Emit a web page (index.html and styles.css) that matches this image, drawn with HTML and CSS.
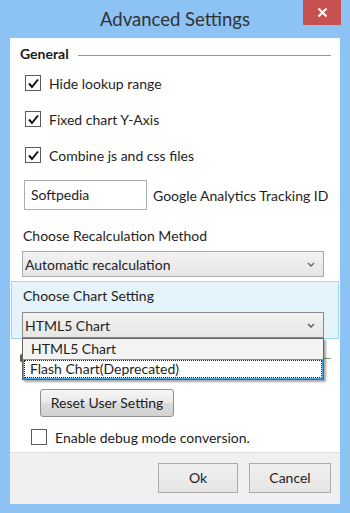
FILE: index.html
```html
<!DOCTYPE html>
<html>
<head>
<meta charset="utf-8">
<link rel="stylesheet" href="styles.css">
</head>
<body>
<div class="window">
  <div class="titlebar">
    <span></span>
    <div class="title">Advanced Settings</div>
    <div class="close">
      <svg width="11" height="11" viewBox="0 0 11 11"><path d="M1.5 1.5 L9.5 9.5 M9.5 1.5 L1.5 9.5" stroke="#fff" stroke-width="2.2" fill="none"/></svg>
    </div>
  </div>
  <div class="client">
    <div class="group-head"><span>General</span><div class="gline"></div></div>
    <div class="check-row first">
      <span class="cb"><svg width="13" height="13" viewBox="0 0 13 13"><path d="M2 6.5 L5 10 L11 2.5" stroke="#111" stroke-width="2" fill="none"/></svg></span>
      <span>Hide lookup range</span>
    </div>
    <div class="check-row">
      <span class="cb"><svg width="13" height="13" viewBox="0 0 13 13"><path d="M2 6.5 L5 10 L11 2.5" stroke="#111" stroke-width="2" fill="none"/></svg></span>
      <span>Fixed chart Y-Axis</span>
    </div>
    <div class="check-row">
      <span class="cb"><svg width="13" height="13" viewBox="0 0 13 13"><path d="M2 6.5 L5 10 L11 2.5" stroke="#111" stroke-width="2" fill="none"/></svg></span>
      <span>Combine js and css files</span>
    </div>
    <div class="text-row">
      <div class="textbox">Softpedia</div>
      <span>Google Analytics Tracking ID</span>
    </div>
    <div class="label recalc">Choose Recalculation Method</div>
    <div class="combo c1">
      <span>Automatic recalculation</span>
      <svg class="chev" width="8" height="5" viewBox="0 0 8 5"><path d="M1 1 L4 4 L7 1" stroke="#666" stroke-width="1.3" fill="none"/></svg>
    </div>
    <div class="panel">
      <div class="label">Choose Chart Setting</div>
      <div class="combo c2">
        <span>HTML5 Chart</span>
        <svg class="chev" width="8" height="5" viewBox="0 0 8 5"><path d="M1 1 L4 4 L7 1" stroke="#555" stroke-width="1.3" fill="none"/></svg>
        <div class="droplist">
          <div class="item">HTML5 Chart</div>
          <div class="item sel"><span class="dots">Flash Chart(Deprecated)</span></div>
        </div>
      </div>
    </div>
    <div class="group-head g2"><span class="gmark"></span><div class="gline"></div></div>
    <div class="hidden-row"></div>
    <div class="reset-btn">Reset User Setting</div>
    <div class="check-row debug">
      <span class="cb"></span>
      <span>Enable debug mode conversion.</span>
    </div>
    <div class="footer">
      <div class="btn ok">Ok</div>
      <div class="btn cancel">Cancel</div>
    </div>
  </div>
</div>
</body>
</html>
```
FILE: styles.css
```css
html, body {
  margin: 0;
  padding: 0;
}
body {
  width: 350px;
  height: 513px;
  background: #8cc2f4;
  font-family: Lato, "Open Sans", sans-serif;
  font-size: 14px;
  color: #1e1e1e;
  overflow: hidden;
}
.window {
  width: 350px;
  height: 513px;
  display: flex;
  flex-direction: column;
}
.titlebar {
  height: 38px;
  display: grid;
  grid-template-columns: 1fr auto 1fr;
  flex: none;
}
.title {
  font-size: 18.5px;
  color: #333;
  padding-top: 8px;
  line-height: 22px;
}
.close {
  justify-self: end;
  width: 38px;
  height: 25px;
  margin-right: 9px;
  background: #c75050;
  display: flex;
  align-items: center;
  justify-content: center;
}
.close svg { display: block; }
.client {
  margin: 0 10px;
  height: 466px;
  background: #fff;
  display: flex;
  flex-direction: column;
  flex: none;
}
.group-head {
  margin-top: 7px;
  height: 18px;
  display: flex;
  align-items: center;
  padding-left: 10px;
  padding-right: 9px;
  font-weight: bold;
  font-size: 14px;
  color: #1a1a1a;
  line-height: 18px;
}
.gline {
  flex: 1;
  height: 1px;
  background: #6cb46c;
  margin-left: 9px;
  margin-top: 2px;
}
.gmark {
  width: 3px;
  height: 8px;
  background: #6b5a30;
  border-radius: 2px;
  margin-top: 1px;
  margin-right: 48px;
}
.check-row {
  height: 36px;
  display: flex;
  align-items: center;
  padding-left: 15px;
  gap: 8px;
}
.check-row.first { margin-top: 2px; }
.cb {
  width: 14px;
  height: 14px;
  border: 1px solid #5a5a5a;
  background: #fff;
  display: flex;
  align-items: center;
  justify-content: center;
  flex: none;
}
.cb svg { display: block; }
.text-row {
  margin-top: 7px;
  height: 30px;
  display: flex;
  align-items: center;
  padding-left: 14px;
  gap: 6px;
}
.textbox {
  width: 115px;
  height: 28px;
  border: 1px solid #abadb3;
  padding-left: 6px;
  line-height: 28px;
  box-sizing: content-box;
}
.label {
  height: 18px;
  line-height: 18px;
  padding-left: 13px;
}
.label.recalc { margin-top: 17px; }
.combo {
  position: relative;
  height: 24px;
  width: 300px;
  border: 1px solid #acacac;
  background: linear-gradient(#f2f2f2, #e6e6e6);
  display: flex;
  align-items: center;
  padding-left: 2px;
  box-sizing: content-box;
}
.combo > span { flex: 1; }
.chev { margin-right: 8px; display: block; }
.c1 {
  margin-left: 12px;
  margin-top: 6px;
  width: 298px;
}
.panel {
  margin-top: 4px;
  margin-left: 1px;
  width: 326px;
  height: 56px;
  border: 1px solid #a6d5ef;
  background: #e5f3fb;
}
.panel .label {
  margin-top: 5px;
  padding-left: 11px;
}
.c2 {
  margin-left: 10px;
  margin-top: 7px;
  width: 298px;
  border-color: #8a8a8a;
}
.droplist {
  position: absolute;
  left: -1px;
  top: 25px;
  width: 300px;
  height: 40px;
  border: 1px solid #646464;
  background: #fff;
  box-shadow: 2px 2px 2px rgba(0,0,0,0.35);
  z-index: 5;
}
.item {
  height: 20px;
  line-height: 20px;
  padding-left: 8px;
  background: #f3f3f3;
}
.item.sel {
  height: 18px;
  padding-left: 0;
  border: 1px solid #4aa3df;
  background: #fff;
  display: flex;
}
.dots {
  flex: 1;
  border: 1px dotted #222;
  padding-left: 5px;
  line-height: 16px;
}
.g2 { margin-top: 9px; }
.hidden-row {
  margin-top: 2px;
  height: 18px;
}
.reset-btn {
  margin-top: 3px;
  margin-left: 30px;
  width: 132px;
  height: 26px;
  border: 1px solid #8f8f8f;
  border-radius: 3px;
  background: linear-gradient(#f6f6f6 0%, #e9e9e9 50%, #dcdcdc 51%, #d2d2d2 100%);
  text-align: center;
  line-height: 26px;
}
.check-row.debug {
  margin-top: 10px;
  height: 20px;
  padding-left: 21px;
  gap: 8px;
}
.footer {
  margin-top: auto;
  border-top: 1px solid #dfdfdf;
  background: #f0f0f0;
  display: flex;
  justify-content: flex-end;
  align-items: flex-start;
  padding-top: 10px;
  padding-right: 9px;
  gap: 11px;
  box-sizing: border-box;
  height: 52px;
}
.btn {
  height: 28px;
  border: 1px solid #acacac;
  background: linear-gradient(#f0f0f0, #e5e5e5);
  text-align: center;
  line-height: 28px;
}
.btn.ok { width: 78px; }
.btn.cancel { width: 80px; }
```
